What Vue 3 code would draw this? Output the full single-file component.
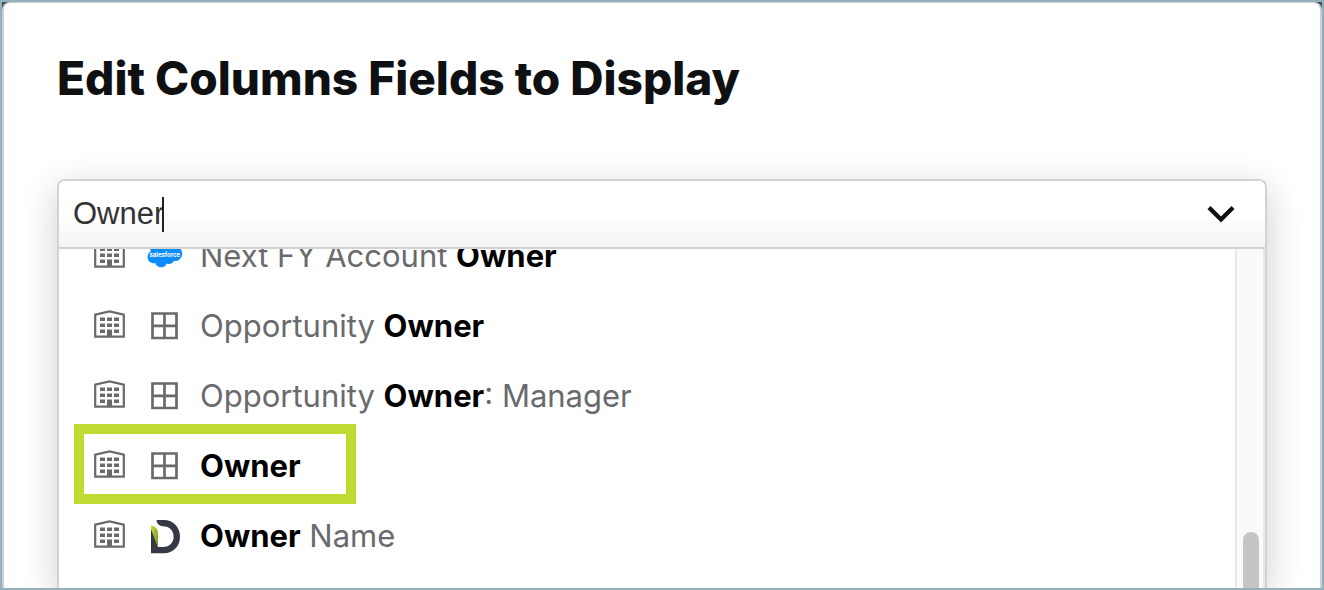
<script setup>
import { ref } from 'vue'

const query = ref('Owner')
const fields = [
  { source: 'salesforce', parts: [{ t: 'Next FY Account ' }, { t: 'Owner', hit: true }] },
  { source: 'grid', parts: [{ t: 'Opportunity ' }, { t: 'Owner', hit: true }] },
  { source: 'grid', parts: [{ t: 'Opportunity ' }, { t: 'Owner', hit: true }, { t: ': Manager' }] },
  { source: 'grid', marked: true, parts: [{ t: 'Owner', hit: true }] },
  { source: 'demandbase', parts: [{ t: 'Owner', hit: true }, { t: ' Name' }] }
]
</script>

<template>
  <div class="backdrop">
    <main class="dialog">
      <h1>Edit Columns Fields to Display</h1>
      <div class="combo">
        <div class="search">
          <input v-model="query" class="query" type="text" aria-label="Search fields" size="5" />
          <span class="caret"></span>
          <button class="toggle" type="button" aria-label="Toggle field list">
            <svg width="28" height="18" viewBox="0 0 28 18">
              <path d="M2 2.5 L14 14.5 L26 2.5" fill="none" stroke="#0f1012" stroke-width="4.4" />
            </svg>
          </button>
        </div>
        <div class="menu">
          <ul class="list">
            <li v-for="(f, i) in fields" :key="i" class="row" :class="{ marked: f.marked }">
              <svg class="building" width="32" height="32" viewBox="0 0 32 32">
                <path d="M1.2 26.6 V4.6 L15.5 1.4 L29.8 4.6 V26.6 Z" fill="none" stroke="#696a6e" stroke-width="2.2" />
                <path
                  d="M6 7.5h5v3.4H6z M13 7.5h5v3.4h-5z M20 7.5h5v3.4h-5z M6 13.5h5v3.4H6z M13 13.5h5v3.4h-5z M20 13.5h5v3.4h-5z M6 19.5h5v3.4H6z M20 19.5h5v3.4h-5z M13 19.5h5v7.5h-5z"
                  fill="#696a6e"
                />
              </svg>
              <span class="source">
                <svg v-if="f.source === 'grid'" width="28" height="28" viewBox="0 0 28 28">
                  <path d="M1.5 1.5 H25.5 V26 H1.5 Z M13.5 1.5 V26 M1.5 13.8 H25.5" fill="none" stroke="#696a6e" stroke-width="2.7" />
                </svg>
                <svg v-else-if="f.source === 'salesforce'" width="36" height="26" viewBox="0 0 36 26">
                  <path
                    d="M15 3.2 C16.3 1.7 18 1 19.8 1 C22.2 1 24.2 2.2 25.3 4.1 C30.4 2 35.2 5.7 35.2 10.7 C35.2 15.3 31.2 18.8 26.8 18 C25.4 20.6 22.4 21.6 19.8 20.4 C17.5 25.7 10.3 25.5 8.3 20.2 C3.8 21 .6 17.7 .6 14 C.6 11.5 1.9 9.5 3.8 8.3 C1.9 3.2 5.3 0 9.4 0 C11.7 0 13.8 1.3 15 3.2 Z"
                    fill="#0d8cfb"
                  />
                  <text x="17.8" y="14" class="brand" text-anchor="middle">salesforce</text>
                </svg>
                <svg v-else width="28" height="36" viewBox="-1 -2 28 36" overflow="visible">
                  <defs>
                    <linearGradient id="leaf" x1="0" y1="0" x2="1" y2="1">
                      <stop offset="0" stop-color="#c4df2c" />
                      <stop offset="1" stop-color="#71912a" />
                    </linearGradient>
                  </defs>
                  <path
                    d="M4.5 0 H12 C21.2 0 28 7.2 28 16.8 C28 26.4 21.2 33.3 12 33.3 H-1 V8 L6 27 H11 C17.6 27 21.6 22.7 21.6 16.8 C21.6 10.8 17.6 6.3 11 6.3 C7.6 6.3 4.8 3.8 4.5 0 Z"
                    fill="#363844"
                  />
                  <path d="M-1 5.5 C3.8 6.4 6 9.4 6 14 V27 L-1 9 Z" fill="url(#leaf)" />
                </svg>
              </span>
              <span class="label"><span v-for="(p, j) in f.parts" :key="j" :class="{ hit: p.hit }">{{ p.t }}</span></span>
            </li>
          </ul>
          <div class="track"><div class="thumb"></div></div>
        </div>
      </div>
    </main>
  </div>
</template>

<style>
body {
  margin: 0;
  overflow: hidden;
}
</style>

<style scoped>
* {
  box-sizing: border-box;
}
.backdrop {
  height: 100vh;
  border: 2px solid #93b0bd;
  background: #4a4e56;
  font-family: Inter, "Liberation Sans", sans-serif;
}
.dialog {
  display: flex;
  flex-direction: column;
  height: 100%;
  padding: 47px 53px 0;
  border: solid #cdd0d3;
  border-width: 1px 2px 0;
  border-radius: 8px 8px 0 0;
  background: #fff;
  overflow: hidden;
}
h1 {
  flex: none;
  margin: 0 0 73px;
  font-size: 46px;
  line-height: 56px;
  font-weight: 800;
  color: #0f1012;
  white-space: nowrap;
}
.combo {
  display: flex;
  flex: 1;
  flex-direction: column;
  min-height: 0;
  border: 2px solid #d3d3d3;
  border-bottom: 0;
  border-radius: 8px 8px 0 0;
  box-shadow: 0 10px 36px rgba(0, 0, 0, 0.2);
}
.search {
  display: flex;
  align-items: center;
  height: 68px;
  flex: none;
  padding: 0 24px 0 14px;
  border-bottom: 2px solid #d3d3d3;
  border-radius: 6px 6px 0 0;
  background: linear-gradient(#fff 50%, #f4f4f4);
}
.query {
  field-sizing: content;
  padding: 0;
  border: 0;
  outline: 0;
  background: transparent;
  font-family: "Liberation Sans", Arial, sans-serif;
  font-size: 31px;
  line-height: 40px;
  color: #333;
}
.caret {
  width: 2px;
  height: 35px;
  margin-left: -2px;
  background: #222;
}
.toggle {
  display: flex;
  width: 40px;
  height: 40px;
  align-items: center;
  justify-content: center;
  margin-left: auto;
  padding: 0;
  border: 0;
  background: transparent;
}
.menu {
  display: flex;
  flex: 1;
  min-height: 0;
  overflow: hidden;
  background: #fff;
}
.list {
  flex: 1;
  margin: -28px 0 0;
  padding: 0;
  list-style: none;
}
.row {
  position: relative;
  display: flex;
  align-items: center;
  height: 70px;
  padding-left: 35px;
  white-space: nowrap;
}
.marked::after {
  content: "";
  position: absolute;
  top: -7px;
  left: 15px;
  box-sizing: border-box;
  width: 282px;
  height: 80px;
  border: 10px solid #bfda32;
}
.building {
  flex: none;
}
.source {
  display: flex;
  justify-content: center;
  width: 40px;
  margin: 0 15px 0 19px;
}
.brand {
  fill: #fff;
  font-size: 6px;
  font-weight: 700;
}
.label {
  font-size: 31px;
  line-height: 40px;
  color: #696a6e;
  white-space: pre;
}
.hit {
  font-weight: 700;
  color: #000;
}
.track {
  flex: none;
  width: 30px;
  padding: 283px 4px 0 6px;
  border: solid #e8e8e8;
  border-width: 0 2px;
  background: #fafafa;
}
.thumb {
  width: 16px;
  height: 160px;
  border-radius: 8px;
  background: #c5c5c5;
}
</style>
